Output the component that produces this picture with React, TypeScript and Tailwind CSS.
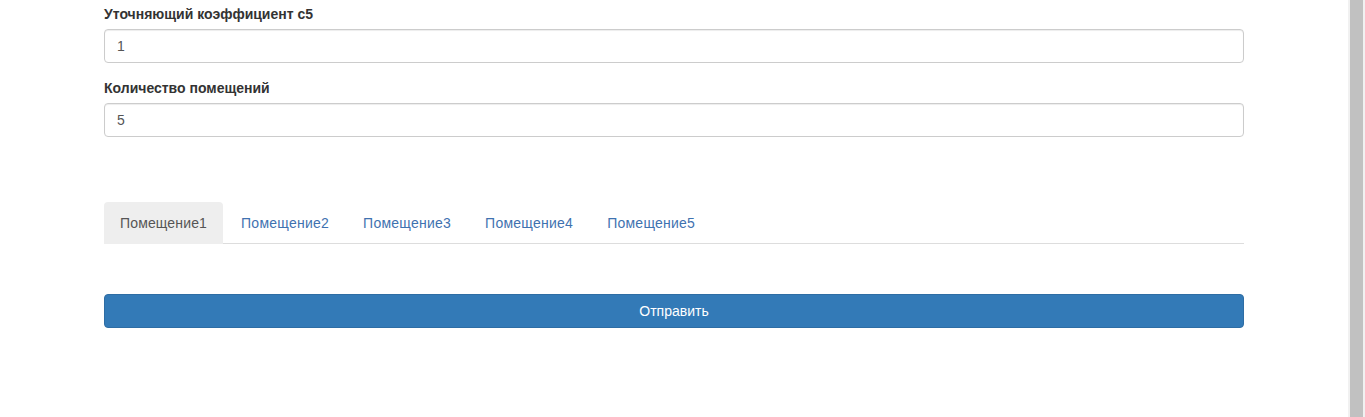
export default function App() {
  const tabs = ['Помещение1', 'Помещение2', 'Помещение3', 'Помещение4', 'Помещение5']

  return (
    <div className="flex h-[417px] overflow-hidden bg-white font-['Liberation_Sans',Arial,sans-serif] text-[14px] leading-[20px] text-[#333]">
      <div className="flex-1">
        <div className="mx-auto w-[1140px] pt-[4px]">
          <div className="mb-[15px]">
            <label className="mb-[5px] block font-bold">Уточняющий коэффициент с5</label>
            <input
              readOnly
              value="1"
              className="block h-[34px] w-full rounded-[4px] border border-[#ccc] px-[12px] py-[6px] text-[#555] shadow-[inset_0_1px_1px_rgba(0,0,0,0.075)] outline-none"
            />
          </div>
          <div className="mb-[15px]">
            <label className="mb-[5px] block font-bold">Количество помещений</label>
            <input
              readOnly
              value="5"
              className="block h-[34px] w-full rounded-[4px] border border-[#ccc] px-[12px] py-[6px] text-[#555] shadow-[inset_0_1px_1px_rgba(0,0,0,0.075)] outline-none"
            />
          </div>

          <ul className="mt-[65px] flex border-b border-[#ddd]">
            {tabs.map((t, i) => (
              <li key={t} className="mr-[2px] -mb-px">
                <a
                  className={
                    i === 0
                      ? 'block rounded-t-[4px] border border-transparent bg-[#eee] px-[15px] py-[10px] tracking-[0.15px] text-[#555]'
                      : 'block rounded-t-[4px] border border-transparent px-[15px] py-[10px] tracking-[0.25px] text-[#3f72b0]'
                  }
                >
                  {t}
                </a>
              </li>
            ))}
          </ul>

          <button className="mt-[50px] block h-[34px] w-full rounded-[4px] border border-[#2e6da4] bg-[#337ab7] px-[12px] py-[6px] text-white">
            Отправить
          </button>
        </div>
      </div>
      <div className="w-[17px] bg-[#f1f1f1] px-[2px]">
        <div className="h-full bg-[#c1c1c1]" />
      </div>
    </div>
  )
}
